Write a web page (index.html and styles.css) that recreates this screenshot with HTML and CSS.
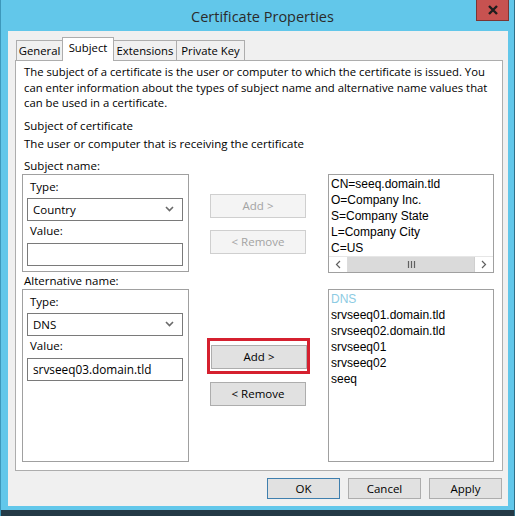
FILE: index.html
```html
<!DOCTYPE html>
<html lang="en">

<head>
    <meta charset="UTF-8">
    <title>Certificate Properties</title>
    <link rel="stylesheet" href="styles.css">
</head>

<body>
    <div class="window">
        <!-- title bar -->
        <div class="titlebar">
            <span class="title">Certificate Properties</span>
            <div class="close">
                <svg width="12" height="10" viewBox="0 0 12 10">
                    <path d="M2 1 L10 9 M10 1 L2 9" stroke="#1e1e1e" stroke-width="2.4" />
                </svg>
            </div>
        </div>

        <div class="client">
            <!-- tabs -->
            <div class="tabs">
                <div class="tab tab-general">General</div>
                <div class="tab tab-subject active">Subject</div>
                <div class="tab tab-ext">Extensions</div>
                <div class="tab tab-key">Private Key</div>
            </div>

            <div class="panel">
                <p class="intro">The subject of a certificate is the user or computer to which the certificate is issued. You can enter information about the types of subject name and alternative name values that can be used in a certificate.</p>
                <div class="heading">Subject of certificate</div>
                <div class="desc">The user or computer that is receiving the certificate</div>

                <div class="names">
                    <div class="label">Subject name:</div>
                    <div></div>
                    <div></div>

                    <div class="group">
                        <div class="field-label">Type:</div>
                        <div class="select">
                            <span>Country</span>
                            <svg width="9" height="6" viewBox="0 0 9 6"><path d="M1 1 L4.5 4.5 L8 1" fill="none" stroke="#6a6a6a" stroke-width="1.6" /></svg>
                        </div>
                        <div class="field-label value-label">Value:</div>
                        <div class="input"></div>
                    </div>
                    <div class="actions actions-subject">
                        <button class="btn disabled">Add &gt;</button>
                        <button class="btn disabled">&lt; Remove</button>
                    </div>
                    <div class="list list-subject">
                        <div class="items">
                            <div>CN=seeq.domain.tld</div>
                            <div>O=Company Inc.</div>
                            <div>S=Company State</div>
                            <div>L=Company City</div>
                            <div>C=US</div>
                        </div>
                        <div class="hscroll">
                            <div class="arrow">
                                <svg width="6" height="9" viewBox="0 0 6 9"><path d="M5 1 L1.5 4.5 L5 8" fill="none" stroke="#606060" stroke-width="1.2" /></svg>
                            </div>
                            <div class="thumb">
                                <svg width="9" height="7" viewBox="0 0 9 7"><path d="M1.5 0 V7 M4.5 0 V7 M7.5 0 V7" stroke="#606060" stroke-width="1.2" /></svg>
                            </div>
                            <div class="arrow arrow-right">
                                <svg width="6" height="9" viewBox="0 0 6 9"><path d="M1 1 L4.5 4.5 L1 8" fill="none" stroke="#606060" stroke-width="1.2" /></svg>
                            </div>
                        </div>
                    </div>

                    <div class="label">Alternative name:</div>
                    <div></div>
                    <div></div>

                    <div class="group group-alt">
                        <div class="field-label">Type:</div>
                        <div class="select">
                            <span>DNS</span>
                            <svg width="9" height="6" viewBox="0 0 9 6"><path d="M1 1 L4.5 4.5 L8 1" fill="none" stroke="#6a6a6a" stroke-width="1.6" /></svg>
                        </div>
                        <div class="field-label value-label">Value:</div>
                        <div class="input">srvseeq03.domain.tld</div>
                    </div>
                    <div class="actions actions-alt">
                        <div class="highlight">
                            <button class="btn">Add &gt;</button>
                        </div>
                        <button class="btn">&lt; Remove</button>
                    </div>
                    <div class="list list-alt">
                        <div class="items">
                            <div class="category">DNS</div>
                            <div>srvseeq01.domain.tld</div>
                            <div>srvseeq02.domain.tld</div>
                            <div>srvseeq01</div>
                            <div>srvseeq02</div>
                            <div>seeq</div>
                        </div>
                    </div>
                </div>
            </div>

            <!-- dialog buttons -->
            <div class="dialog-buttons">
                <button class="btn dlg default">OK</button>
                <button class="btn dlg">Cancel</button>
                <button class="btn dlg">Apply</button>
            </div>
        </div>
        <div class="frame-bottom"></div>
    </div>
</body>

</html>
```

FILE: styles.css
```css
* {
    padding: 0;
    margin: 0;
    box-sizing: border-box;
}

body {
    width: 515px;
    height: 516px;
    overflow: hidden;
    font-family: "Open Sans", "Noto Sans", sans-serif;
    font-size: 11.5px;
    color: #000;
}

.window {
    position: relative;
    width: 515px;
    height: 516px;
    background: #62c7ea;
    border-left: 1px solid #3d98bb;
    border-right: 1px solid #2e6f88;
    display: flex;
    flex-direction: column;
}

.titlebar {
    height: 31px;
    display: flex;
    justify-content: center;
    align-items: center;
}

.title {
    font-size: 14.5px;
    color: #2b2b2b;
    margin-left: 10px;
    margin-top: 1px;
}

.close {
    position: absolute;
    top: 0;
    right: 5px;
    width: 33px;
    height: 21px;
    background: #c75250;
    border: 1px solid #7b3533;
    border-top: none;
    display: flex;
    justify-content: center;
    align-items: center;
}

.client {
    margin: 0 6px 0 7px;
    height: 475px;
    background: #f0f0f0;
    padding: 6px 5px 0 7px;
}

.frame-bottom {
    margin-top: 4px;
    flex: 1;
    background: #243a46;
}

/* tabs */
.tabs {
    height: 23px;
    display: flex;
    align-items: flex-end;
    padding-left: 1px;
}

.tab {
    height: 20px;
    border: 1px solid #adadad;
    border-bottom: none;
    border-right: none;
    background: #f0f0f0;
    text-align: center;
    line-height: 19px;
    font-size: 11.3px;
}

.tab-general { width: 46px; }
.tab-subject { width: 52px; }
.tab-ext { width: 62px; }
.tab-key { width: 69px; border-right: 1px solid #adadad; }

.tab.active {
    height: 24px;
    margin-bottom: -1px;
    background: #fff;
    border-right: 1px solid #adadad;
    line-height: 20px;
    position: relative;
    z-index: 1;
}

.tab.active + .tab {
    border-left: none;
}

.panel {
    height: 411px;
    background: #fff;
    border: 1px solid #adadad;
    padding: 3px 6px 0 6px;
}

.intro,
.heading,
.desc {
    padding-left: 2px;
    line-height: 15.5px;
}

.intro {
    font-size: 11.3px;
}

.heading {
    margin-top: 7px;
}

.desc {
    margin-top: 3px;
}

/* name area */
.names {
    margin-top: 6px;
    display: grid;
    grid-template-columns: 167px 139px 166px;
}

.label {
    padding-left: 2px;
    line-height: 15px;
    height: 16px;
}

.group {
    height: 98px;
    border: 1px solid #a0a0a0;
    padding: 4px 5px 0 4px;
}

.group-alt {
    height: 173px;
}

.field-label {
    height: 16px;
    line-height: 16px;
    padding-left: 3px;
}

.value-label {
    margin-top: 2px;
}

.select,
.input {
    height: 23px;
    border: 1px solid #7a7a7a;
    background: #fff;
    padding: 0 8px 0 5px;
    line-height: 21px;
    display: flex;
    align-items: center;
    justify-content: space-between;
}

.select {
    margin-top: 3px;
}

.input {
    margin-top: 4px;
    font-size: 11.8px;
}

.actions {
    display: flex;
    flex-direction: column;
    align-items: flex-start;
    padding-left: 21px;
}

.actions-subject {
    padding-top: 20px;
    gap: 12px;
}

.actions-alt {
    padding-top: 49px;
    padding-left: 18px;
}

.highlight {
    border: 3px solid #d5202f;
    padding: 4px 0 2px 1px;
    width: 103px;
    margin-bottom: 7px;
}

.btn {
    width: 96px;
    height: 24px;
    border: 1px solid #adadad;
    background: #e1e1e1;
    font-family: inherit;
    font-size: 11.5px;
    color: #000;
}

.actions-alt > .btn {
    margin-left: 3px;
    margin-top: 1px;
}

.btn.disabled {
    background: #f4f4f4;
    border-color: #cfcfcf;
    color: #a3a3a3;
}

/* list boxes */
.list {
    border: 1px solid #a0a0a0;
    background: #fff;
    display: flex;
    flex-direction: column;
    font-family: "Liberation Sans", Arial, sans-serif;
    font-size: 12px;
}

.list-subject {
    height: 99px;
}

.list-alt {
    height: 173px;
}

.items {
    flex: 1;
    padding: 1px 0 0 2px;
    line-height: 16px;
}

.category {
    color: #8ccbe3;
}

.hscroll {
    height: 16px;
    display: flex;
    border-top: 1px solid #e6e6e6;
}

.arrow {
    width: 19px;
    display: flex;
    justify-content: center;
    align-items: center;
    border-right: 1px solid #dcdcdc;
}

.arrow-right {
    border-right: none;
    border-left: 1px solid #cfcfcf;
}

.thumb {
    flex: 1;
    background: #dadada;
    display: flex;
    justify-content: center;
    align-items: center;
}

/* bottom buttons */
.dialog-buttons {
    margin-top: 7px;
    margin-right: 1px;
    display: flex;
    justify-content: flex-end;
    gap: 8px;
}

.btn.dlg {
    width: 73px;
    height: 21px;
}

.btn.default {
    border-color: #3f7fae;
}
```
